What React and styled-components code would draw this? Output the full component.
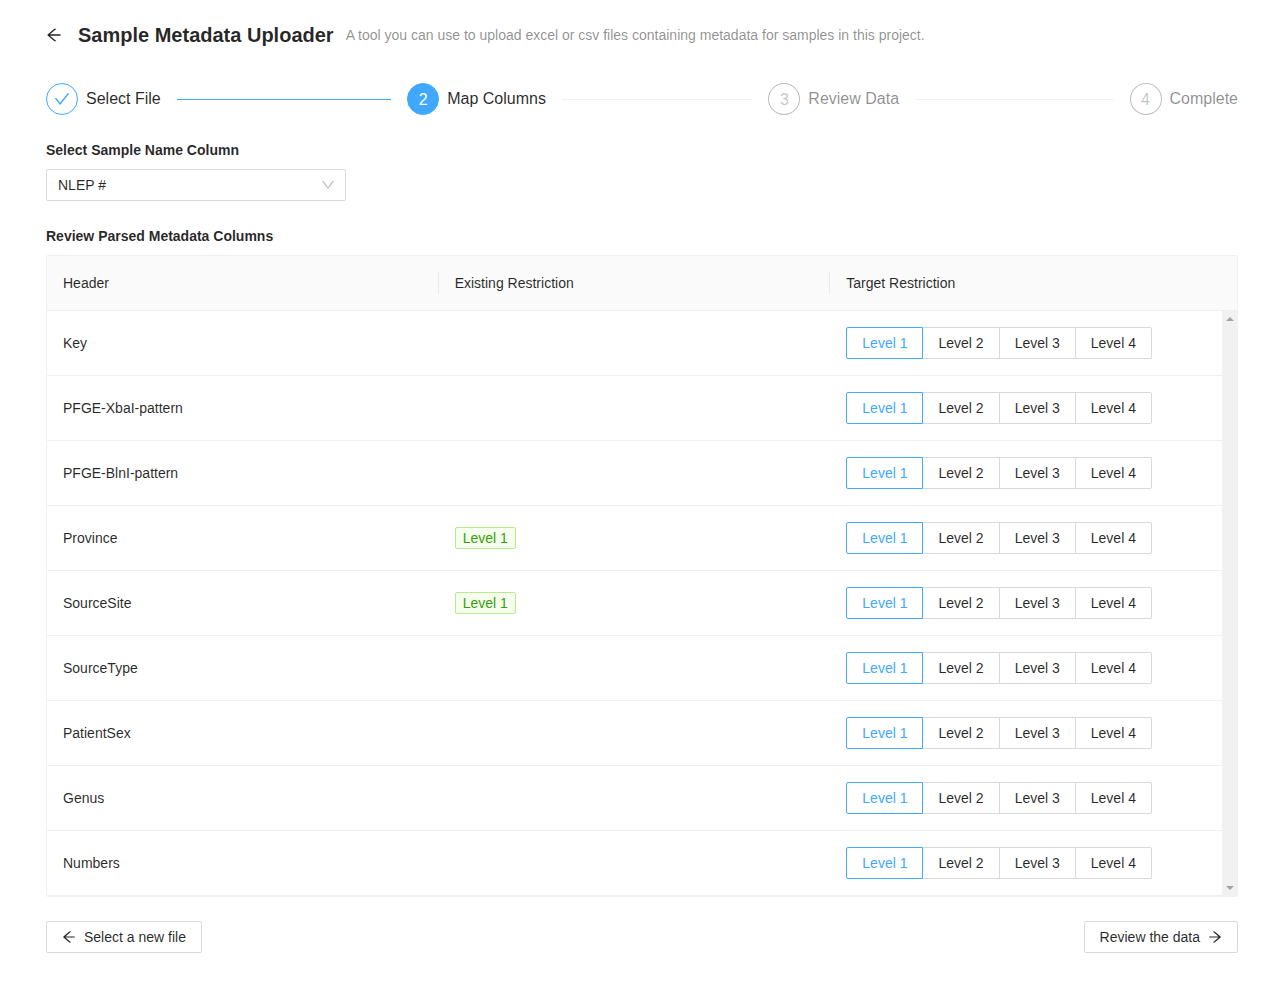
import React from 'react';
import styled, { createGlobalStyle } from 'styled-components';

const BLUE = '#40a9ff';
const TEXT = 'rgba(0, 0, 0, 0.85)';
const MUTED = 'rgba(0, 0, 0, 0.45)';
const FAINT = 'rgba(0, 0, 0, 0.25)';

const ICONS = {
  left: 'M872 474H286.9l350.2-304c5.6-4.9 2.2-14-5.2-14h-88.5c-3.9 0-7.6 1.4-10.5 3.9L155 487.8a31.96 31.96 0 0 0 0 48.3L535.1 866c1.5 1.3 3.3 2 5.2 2h91.5c7.4 0 10.8-9.2 5.2-14L286.9 550H872c4.4 0 8-3.6 8-8v-60c0-4.4-3.6-8-8-8z',
  right: 'M869 487.8L491.2 159.9c-2.9-2.5-6.6-3.9-10.5-3.9h-88.5c-7.4 0-10.8 9.2-5.2 14l350.2 304H152c-4.4 0-8 3.6-8 8v60c0 4.4 3.6 8 8 8h585.1L386.9 854c-5.6 4.9-2.2 14 5.2 14h91.5c1.9 0 3.8-.7 5.2-2L869 536.2a32.1 32.1 0 0 0 0-48.4z',
  down: 'M884 256h-75c-5.1 0-9.9 2.5-12.9 6.6L512 654.2 227.9 262.6c-3-4.1-7.8-6.6-12.9-6.6h-75c-6.5 0-10.3 7.4-6.5 12.7l352.6 486.1c12.8 17.6 39 17.6 51.7 0l352.6-486.1c3.9-5.3.1-12.7-6.4-12.7z',
  check: 'M912 190h-69.9c-9.8 0-19.1 4.5-25.1 12.2L404.7 724.5 207 474a32 32 0 0 0-25.1-12.2H112c-6.7 0-10.4 7.7-6.3 12.9l273.9 347c12.8 16.2 37.4 16.2 50.3 0l488.4-618.9c4.1-5.1.4-12.8-6.3-12.8z',
};

const GlobalStyle = createGlobalStyle`
  * { box-sizing: border-box; }
  body {
    margin: 0;
    background: #fff;
    color: ${TEXT};
    font-family: "Liberation Sans", Arial, sans-serif;
    font-size: 14px;
    line-height: 22px;
  }
`;

const Page = styled.div`
  padding: 19px 45px 29px 46px;
`;

const Heading = styled.div`
  display: flex;
  align-items: center;
  height: 32px;
`;

const BackIcon = styled.span`
  display: inline-flex;
  font-size: 16px;
  margin-right: 16px;
  color: ${TEXT};
`;

const Title = styled.h1`
  margin: 0 12px 0 0;
  font-size: 20px;
  line-height: 32px;
  font-weight: 700;
`;

const Subtitle = styled.span`
  color: ${MUTED};
`;

const Steps = styled.div`
  display: flex;
  margin-top: 32px;
`;

const Step = styled.div`
  display: flex;
  align-items: flex-start;
  flex: ${(p) => (p.$last ? '0 0 auto' : '1 1 0')};
  margin-right: ${(p) => (p.$last ? '0' : '16px')};
`;

const StepCircle = styled.span`
  display: flex;
  align-items: center;
  justify-content: center;
  flex: none;
  width: 32px;
  height: 32px;
  margin-right: 8px;
  padding-top: ${(p) => (p.$state === 'done' ? '0' : '2px')};
  border-radius: 50%;
  font-size: 16px;
  border: 1px solid ${(p) => (p.$state === 'wait' ? FAINT : BLUE)};
  background: ${(p) => (p.$state === 'active' ? BLUE : '#fff')};
  color: ${(p) => (p.$state === 'active' ? '#fff' : p.$state === 'wait' ? FAINT : BLUE)};
`;

const StepLabel = styled.span`
  flex: none;
  padding-right: ${(p) => (p.$last ? '0' : '16px')};
  font-size: 16px;
  line-height: 32px;
  color: ${(p) => (p.$state === 'wait' ? MUTED : TEXT)};
`;

const StepLine = styled.span`
  flex: 1;
  height: 1px;
  margin-top: 16px;
  background: ${(p) => (p.$done ? BLUE : '#f0f0f0')};
`;

const SectionLabel = styled.div`
  margin: 24px 0 8px;
  font-weight: 700;
`;

const Select = styled.div`
  display: flex;
  align-items: center;
  justify-content: space-between;
  width: 300px;
  height: 32px;
  padding: 0 10px 0 11px;
  border: 1px solid #d9d9d9;
  border-radius: 2px;
  color: #bfbfbf;
  font-size: 14px;
`;

const SelectValue = styled.span`
  color: ${TEXT};
`;

const Table = styled.div`
  border: 1px solid #f0f0f0;
  border-radius: 2px;
`;

const HeaderRow = styled.div`
  display: grid;
  grid-template-columns: 391.67px 391.67px 1fr;
  height: 55px;
  background: #fafafa;
  border-bottom: 1px solid #f0f0f0;
`;

const HeaderCell = styled.div`
  position: relative;
  display: flex;
  align-items: center;
  padding: 0 16px;
  &:not(:last-child)::after {
    content: '';
    position: absolute;
    right: 0;
    top: 50%;
    width: 1px;
    height: 22px;
    transform: translateY(-50%);
    background: rgba(0, 0, 0, 0.06);
  }
`;

const Body = styled.div`
  display: grid;
  grid-template-columns: 1fr 15px;
  height: 585px;
`;

const Row = styled.div`
  display: grid;
  grid-template-columns: repeat(3, 1fr);
  height: 65px;
  border-bottom: 1px solid #f0f0f0;
`;

const Cell = styled.div`
  display: flex;
  align-items: center;
  padding: 0 16px;
`;

const Tag = styled.span`
  height: 22px;
  padding: 0 7px;
  line-height: 20px;
  color: #389e0d;
  background: #f6ffed;
  border: 1px solid #b7eb8f;
  border-radius: 2px;
`;

const RadioGroup = styled.div`
  display: flex;
`;

const RadioButton = styled.span`
  height: 32px;
  padding: 0 15px;
  line-height: 30px;
  margin-left: -1px;
  background: #fff;
  border: 1px solid ${(p) => (p.$checked ? BLUE : '#d9d9d9')};
  color: ${(p) => (p.$checked ? BLUE : TEXT)};
  position: relative;
  z-index: ${(p) => (p.$checked ? 1 : 0)};
  &:first-child { margin-left: 0; border-radius: 2px 0 0 2px; }
  &:last-child { border-radius: 0 2px 2px 0; }
`;

// the table's scrollbar, headless chrome would not paint a native one
const ScrollTrack = styled.div`
  display: flex;
  flex-direction: column;
  align-items: center;
  justify-content: space-between;
  padding: 6px 0;
  background: #f1f1f1;
`;

const ScrollArrow = styled.span`
  width: 0;
  height: 0;
  border-left: 4px solid transparent;
  border-right: 4px solid transparent;
  border-bottom: ${(p) => (p.$down ? '0' : '4px solid #a3a3a3')};
  border-top: ${(p) => (p.$down ? '4px solid #a3a3a3' : '0')};
`;

const Footer = styled.div`
  display: flex;
  justify-content: space-between;
  margin-top: 24px;
`;

const Button = styled.button`
  display: inline-flex;
  align-items: center;
  gap: 8px;
  height: 32px;
  padding: 0 15px;
  background: #fff;
  border: 1px solid #d9d9d9;
  border-radius: 2px;
  color: ${TEXT};
  font: inherit;
`;

const Icon = ({ name }) => (
  <svg viewBox="64 64 896 896" width="1em" height="1em" fill="currentColor" aria-hidden="true">
    <path d={ICONS[name]} />
  </svg>
);

const STEPS = [
  { label: 'Select File', state: 'done' },
  { label: 'Map Columns', state: 'active' },
  { label: 'Review Data', state: 'wait' },
  { label: 'Complete', state: 'wait' },
];

const ROWS = [
  { name: 'Key' },
  { name: 'PFGE-XbaI-pattern' },
  { name: 'PFGE-BlnI-pattern' },
  { name: 'Province', existing: 'Level 1' },
  { name: 'SourceSite', existing: 'Level 1' },
  { name: 'SourceType' },
  { name: 'PatientSex' },
  { name: 'Genus' },
  { name: 'Numbers' },
];

const LEVELS = ['Level 1', 'Level 2', 'Level 3', 'Level 4'];

export default function App() {
  return (
    <Page>
      <GlobalStyle />
      <Heading>
        <BackIcon><Icon name="left" /></BackIcon>
        <Title>Sample Metadata Uploader</Title>
        <Subtitle>A tool you can use to upload excel or csv files containing metadata for samples in this project.</Subtitle>
      </Heading>

      <Steps>
        {STEPS.map((step, i) => {
          const last = i === STEPS.length - 1;
          return (
            <Step key={step.label} $last={last}>
              <StepCircle $state={step.state}>
                {step.state === 'done' ? <Icon name="check" /> : i + 1}
              </StepCircle>
              <StepLabel $state={step.state} $last={last}>{step.label}</StepLabel>
              {!last && <StepLine $done={step.state === 'done'} />}
            </Step>
          );
        })}
      </Steps>

      <SectionLabel>Select Sample Name Column</SectionLabel>
      <Select>
        <SelectValue>NLEP #</SelectValue>
        <Icon name="down" />
      </Select>

      <SectionLabel>Review Parsed Metadata Columns</SectionLabel>
      <Table>
        <HeaderRow>
          <HeaderCell>Header</HeaderCell>
          <HeaderCell>Existing Restriction</HeaderCell>
          <HeaderCell>Target Restriction</HeaderCell>
        </HeaderRow>
        <Body>
          <div>
            {ROWS.map((row) => (
              <Row key={row.name}>
                <Cell>{row.name}</Cell>
                <Cell>{row.existing && <Tag>{row.existing}</Tag>}</Cell>
                <Cell>
                  <RadioGroup>
                    {LEVELS.map((level, i) => (
                      <RadioButton key={level} $checked={i === 0}>{level}</RadioButton>
                    ))}
                  </RadioGroup>
                </Cell>
              </Row>
            ))}
          </div>
          <ScrollTrack>
            <ScrollArrow />
            <ScrollArrow $down />
          </ScrollTrack>
        </Body>
      </Table>

      <Footer>
        <Button><Icon name="left" />Select a new file</Button>
        <Button>Review the data<Icon name="right" /></Button>
      </Footer>
    </Page>
  );
}
